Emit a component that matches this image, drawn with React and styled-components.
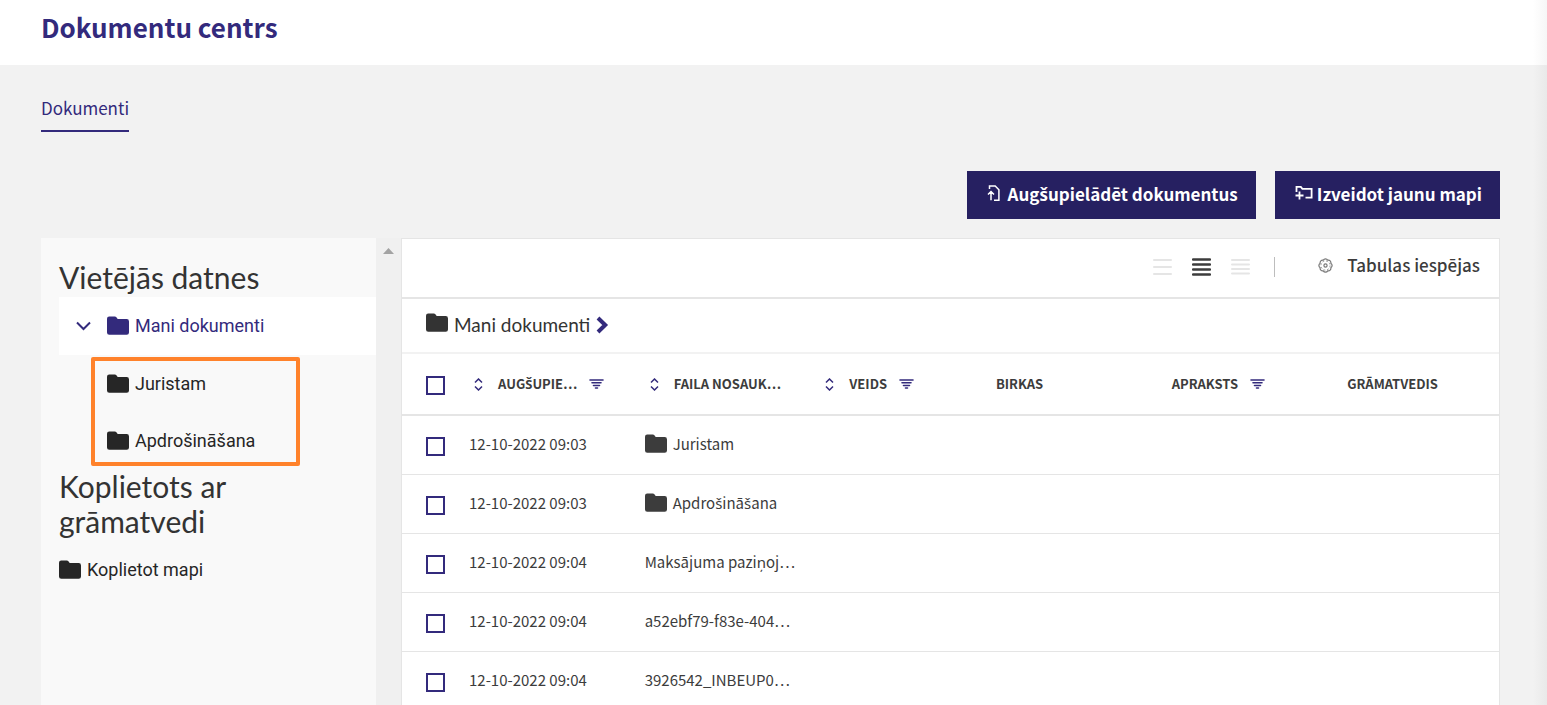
import React, { useState } from "react";
import styled, { createGlobalStyle } from "styled-components";

const color = {
  brand: "#332a7c",
  button: "#262061",
  text: "#3c3c3c",
  dark: "#262626",
  line: "#e5e5e5",
};
const sourceSans = '"Source Sans Pro", "Noto Sans CJK SC", "Noto Sans", sans-serif';
const roboto = 'Roboto, "Noto Sans", sans-serif';
const lato = 'Lato, "Open Sans", sans-serif';

const GlobalStyle = createGlobalStyle`
  *, *::before, *::after { box-sizing: border-box; }
  body { margin: 0; background: #f2f2f2; color: ${color.text}; font-family: ${sourceSans}; }
  button { font: inherit; color: inherit; border: 0; background: none; padding: 0; cursor: pointer; }
  ul { list-style: none; margin: 0; padding: 0; }
  svg { display: block; flex: none; }
`;

const Page = styled.div`
  display: flex;
  flex-direction: column;
  height: 100vh;
  overflow: hidden;
`;

const Header = styled.header`
  flex: none;
  height: 65px;
  padding: 7px 41px;
  background: linear-gradient(to left, #f6f6f6, #fff 14px);
`;

const Title = styled.h1`
  margin: 0;
  font-size: 26px;
  line-height: 40px;
  font-weight: 700;
  color: ${color.brand};
`;

const Main = styled.main`
  flex: 1;
  min-height: 0;
  display: flex;
  flex-direction: column;
  padding: 24px 47px 0 41px;
  background: linear-gradient(to left, #e9e9e9, #f2f2f2 14px);
`;

const Tabs = styled.nav`
  display: flex;
`;

const Tab = styled.a`
  height: 43px;
  line-height: 38px;
  font-size: 17px;
  font-weight: 400;
  color: ${color.brand};
  text-decoration: none;
  border-bottom: 2px solid ${color.brand};
`;

const Actions = styled.div`
  display: flex;
  justify-content: flex-end;
  gap: 19px;
  margin: 39px 0 19px;
`;

const PrimaryButton = styled.button`
  display: flex;
  align-items: center;
  gap: ${(p) => p.$gap}px;
  height: 48px;
  && {
    padding: 0 18px 4px 20px;
    background: ${color.button};
    color: #fff;
    font-size: 17px;
    font-weight: 700;
    white-space: nowrap;
  }
`;

const Workspace = styled.div`
  flex: 1;
  min-height: 0;
  display: grid;
  grid-template-columns: 335px 25px minmax(0, 1fr);
`;

const Sidebar = styled.aside`
  padding: 22px 0 0 18px;
  background: #f9f9f9;
  color: ${color.dark};
`;

const SidebarTitle = styled.h2`
  margin: 0 0 2px;
  padding-right: 100px;
  font: 400 30px/35px ${lato};
  color: #333;
`;

const TreeLink = styled.a`
  display: flex;
  align-items: center;
  gap: 6px;
  height: ${(p) => (p.$active ? 58 : 57)}px;
  padding-left: ${(p) => p.$indent || 0}px;
  font: 400 18px/24px ${roboto};
  color: ${(p) => (p.$active ? color.brand : color.dark)};
  background: ${(p) => (p.$active ? "#fff" : "transparent")};
  text-decoration: none;
`;

const Caret = styled.span`
  display: flex;
  width: 42px;
  padding-left: 17px;
`;

const SubTree = styled.ul`
  position: relative;
`;

const Highlight = styled.li`
  position: absolute;
  top: 2px;
  left: 32px;
  width: 209px;
  height: 109px;
  border: 4px solid #ff822b;
  border-radius: 2px;
  pointer-events: none;
`;

const ScrollTrack = styled.div`
  display: flex;
  justify-content: center;
  padding-top: 10px;
  background: #f0f0f0;
`;

const Card = styled.section`
  background: #fff;
  border: 1px solid ${color.line};
  border-bottom: 0;
`;

const Toolbar = styled.div`
  display: flex;
  align-items: center;
  justify-content: flex-end;
  height: 60px;
  padding: 0 19px 2px 24px;
  border-bottom: 2px solid ${color.line};
`;

const DensityGroup = styled.div`
  display: flex;
  gap: 20px;
  padding: 0 24px 0 0;
`;

const DensityButton = styled.button`
  && {
    color: ${(p) => (p.$active ? color.text : "#e5e5e5")};
  }
`;

const Divider = styled.span`
  width: 1px;
  height: 20px;
  margin-right: 43px;
  background: #bdbdbd;
`;

const OptionsButton = styled.button`
  display: flex;
  align-items: center;
  gap: 14px;
  && {
    padding-bottom: 4px;
    font-size: 17px;
    line-height: 24px;
    font-weight: 500;
  }
`;

const Breadcrumb = styled.nav`
  display: flex;
  align-items: center;
  gap: 6px;
  height: 55px;
  padding: 0 24px 2px;
  border-bottom: 2px solid #f2f2f2;
`;

const Crumb = styled.a`
  display: flex;
  align-items: flex-start;
  gap: 6px;
  font: 400 19px/24px ${lato};
  color: #333;
  text-decoration: none;
`;

const Table = styled.table`
  width: 100%;
  table-layout: fixed;
  border-collapse: separate;
  border-spacing: 0;
`;

const CheckCol = styled.col`
  width: 43px;
`;

const HeadCell = styled.th`
  height: 62px;
  padding: 0 0 0 24px;
  text-align: left;
  font-size: 13px;
  line-height: 16px;
  font-weight: 700;
  text-transform: uppercase;
  border-bottom: 2px solid ${color.line};
`;

const HeadContent = styled.div`
  display: flex;
  align-items: center;
  gap: 12px;
  white-space: nowrap;
`;

const SortButton = styled.button`
  && {
    width: 17px;
    padding-left: 5px;
  }
`;

const Cell = styled.td`
  height: 59px;
  padding: 0 0 2px 24px;
  font-size: 15px;
  line-height: 24px;
  font-weight: 400;
  border-bottom: 1px solid ${color.line};
`;

const CellContent = styled.div`
  display: flex;
  align-items: center;
  gap: 6px;
  white-space: nowrap;
`;

const Checkbox = styled.input`
  appearance: none;
  display: block;
  width: 19px;
  height: 19px;
  margin: ${(p) => (p.$head ? 2 : 4)}px 0 0;
  border: 2px solid ${color.brand};
  background: #fff;
  &:checked { background: ${color.brand}; box-shadow: inset 0 0 0 2px #fff; }
`;

const CaronLetter = styled.span`
  font-family: "Noto Sans", sans-serif;
  line-height: 1;
`;

const Label = ({ children }) => (
  <span>
    {children.split(/([šŠ])/).map((part, i) => (i % 2 ? <CaronLetter key={i}>{part}</CaronLetter> : part))}
  </span>
);

const Folder = ({ fill = "currentColor" }) => (
  <svg width="22" height="20" viewBox="0 0 22 20" fill={fill} aria-hidden="true">
    <path d="M2.2 0.5h5.6q1 0 1.6.8l.9 1.3q.4.5 1 .5h8.400q2.300 0 2.300 2.300v11q0 2.400-2.300 2.400H2.300Q0 18.800 0 16.400V2.700Q0 .5 2.200 .5z" />
  </svg>
);

const UploadIcon = () => (
  <svg width="13" height="17" viewBox="0 0 13 17" fill="none" stroke="#fff" strokeWidth="1.500" aria-hidden="true">
    <path d="M2.500 4V1h5.700l3.700 3.700v10.500H7M4 15.200V7M1 9.500l3-3 3 3" />
  </svg>
);

const NewFolderIcon = () => (
  <svg width="18" height="16" viewBox="0 0 18 16" fill="none" stroke="#fff" strokeWidth="1.800" aria-hidden="true">
    <path d="M1.500 7V1.900h4.300l1.600 2h9.200v8.700H10.500M.5 10.500h8M4.500 6.500v8" />
  </svg>
);

const GearIcon = () => (
  <svg width="15" height="15" viewBox="0 0 15 15" fill="none" stroke="#777" strokeWidth="1.200" aria-hidden="true">
    <path d="M12.860 5.280a2.600 2.600 0 0 1 0 4.440a2.600 2.600 0 0 1-3.140 3.140a2.600 2.600 0 0 1-4.440 0a2.600 2.600 0 0 1-3.140-3.140a2.600 2.600 0 0 1 0-4.440a2.600 2.600 0 0 1 3.140-3.140a2.600 2.600 0 0 1 4.440 0a2.600 2.600 0 0 1 3.140 3.140z" />
    <circle cx="7.500" cy="7.500" r="4.600" strokeWidth=".8" strokeDasharray="1.800 1.810" />
    <circle cx="7.500" cy="7.500" r="1.600" />
  </svg>
);

const SortIcon = () => (
  <svg width="9" height="13" viewBox="0 0 9 13" fill="none" stroke={color.brand} strokeWidth="1.500" aria-hidden="true">
    <path d="M1 4.500L4.500 1L8 4.500M1 8.500L4.500 12L8 8.500" />
  </svg>
);

const FilterIcon = () => (
  <svg width="15" height="10" viewBox="0 0 15 10" fill="none" stroke={color.brand} strokeWidth="1.600" strokeLinecap="round" aria-hidden="true">
    <path d="M1 1h13M3 3.800h9M4.500 6.500h6M6.500 9h2" />
  </svg>
);

const LinesIcon = ({ ys, weight }) => (
  <svg width="19" height="18" viewBox="0 0 19 18" stroke="currentColor" strokeWidth={weight} strokeLinecap="round" aria-hidden="true">
    {ys.map((y) => <path key={y} d={`M1 ${y}h17`} />)}
  </svg>
);

const CaretIcon = () => (
  <svg width="15" height="10" viewBox="0 0 15 10" fill="none" stroke={color.brand} strokeWidth="2" aria-hidden="true">
    <path d="M1 1.500l6.500 6.500L14 1.500" />
  </svg>
);

const ChevronIcon = () => (
  <svg width="13" height="18" viewBox="0 0 13 18" fill="none" stroke={color.brand} strokeWidth="4" aria-hidden="true">
    <path d="M2 2l7.200 7-7.200 7" />
  </svg>
);

const densities = [
  { name: "Plašs", ys: [2, 9, 16], weight: 2 },
  { name: "Vidējs", ys: [1.5, 6.5, 11.5, 16.5], weight: 2.4 },
  { name: "Blīvs", ys: [2, 6.5, 11, 15.5], weight: 2 },
];

const columns = [
  { label: "Augšupie…", sort: true, filter: true },
  { label: "Faila nosauk…", sort: true },
  { label: "Veids", sort: true, filter: true },
  { label: "Birkas" },
  { label: "Apraksts", filter: true },
  { label: "Grāmatvedis" },
];

const files = [
  { date: "12-10-2022 09:03", name: "Juristam", folder: true },
  { date: "12-10-2022 09:03", name: "Apdrošināšana", folder: true },
  { date: "12-10-2022 09:04", name: "Maksājuma paziņoj…" },
  { date: "12-10-2022 09:04", name: "a52ebf79-f83e-404…" },
  { date: "12-10-2022 09:04", name: "3926542_INBEUP0…" },
];

export default function App() {
  const [density, setDensity] = useState(1);
  return (
    <Page>
      <GlobalStyle />
      <Header>
        <Title>Dokumentu centrs</Title>
      </Header>
      <Main>
        <Tabs>
          <Tab href="#dokumenti">Dokumenti</Tab>
        </Tabs>
        <Actions>
          <PrimaryButton type="button" $gap={8}>
            <UploadIcon />
            <Label>Augšupielādēt dokumentus</Label>
          </PrimaryButton>
          <PrimaryButton type="button" $gap={4}>
            <NewFolderIcon />
            <Label>Izveidot jaunu mapi</Label>
          </PrimaryButton>
        </Actions>
        <Workspace>
          <Sidebar>
            <SidebarTitle>Vietējās datnes</SidebarTitle>
            <ul>
              <li>
                <TreeLink href="#mani" $active>
                  <Caret><CaretIcon /></Caret>
                  <Folder />
                  Mani dokumenti
                </TreeLink>
                <SubTree>
                  <li><TreeLink href="#juristam" $indent={48}><Folder />Juristam</TreeLink></li>
                  <li><TreeLink href="#apdrosinasana" $indent={48}><Folder />Apdrošināšana</TreeLink></li>
                  <Highlight aria-hidden="true" />
                </SubTree>
              </li>
            </ul>
            <SidebarTitle>Koplietots ar grāmatvedi</SidebarTitle>
            <ul>
              <li><TreeLink href="#koplietot"><Folder />Koplietot mapi</TreeLink></li>
            </ul>
          </Sidebar>
          <ScrollTrack>
            <svg width="11" height="6" viewBox="0 0 11 6" fill="#a3a3a3" aria-hidden="true">
              <path d="M0 6L5.500 0L11 6z" />
            </svg>
          </ScrollTrack>
          <Card>
            <Toolbar>
              <DensityGroup>
                {densities.map((d, i) => (
                  <DensityButton key={d.name} type="button" aria-label={d.name} $active={i === density} onClick={() => setDensity(i)}>
                    <LinesIcon ys={d.ys} weight={d.weight} />
                  </DensityButton>
                ))}
              </DensityGroup>
              <Divider />
              <OptionsButton type="button">
                <GearIcon />
                <Label>Tabulas iespējas</Label>
              </OptionsButton>
            </Toolbar>
            <Breadcrumb>
              <Crumb href="#mani"><Folder fill="#333" />Mani dokumenti</Crumb>
              <ChevronIcon />
            </Breadcrumb>
            <Table>
              <colgroup>
                <CheckCol />
                {columns.map((c) => <col key={c.label} />)}
              </colgroup>
              <thead>
                <tr>
                  <HeadCell><Checkbox type="checkbox" $head aria-label="Atlasīt visus" /></HeadCell>
                  {columns.map((c) => (
                    <HeadCell key={c.label} scope="col">
                      <HeadContent>
                        {c.sort && <SortButton type="button" aria-label="Kārtot"><SortIcon /></SortButton>}
                        <Label>{c.label}</Label>
                        {c.filter && <button type="button" aria-label="Filtrēt"><FilterIcon /></button>}
                      </HeadContent>
                    </HeadCell>
                  ))}
                </tr>
              </thead>
              <tbody>
                {files.map((f) => (
                  <tr key={f.name}>
                    <Cell><Checkbox type="checkbox" aria-label={f.name} /></Cell>
                    <Cell>{f.date}</Cell>
                    <Cell><CellContent>{f.folder && <Folder />}<Label>{f.name}</Label></CellContent></Cell>
                    <Cell /><Cell /><Cell /><Cell />
                  </tr>
                ))}
              </tbody>
            </Table>
          </Card>
        </Workspace>
      </Main>
    </Page>
  );
}
